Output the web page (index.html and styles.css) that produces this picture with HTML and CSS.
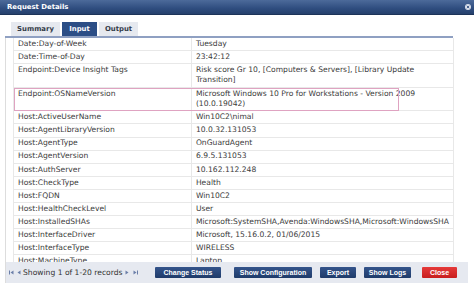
FILE: index.html
```html
<!DOCTYPE html>
<html>
<head>
<meta charset="utf-8">
<link rel="stylesheet" href="styles.css">
</head>
<body>
<div class="dialog">
  <div class="titlebar">
    <span class="title">Request Details</span>
    <span class="close-icon"><svg width="6" height="6" viewBox="0 0 6 6"><circle cx="3" cy="3" r="3" fill="#d8deea"/><path d="M1.8 1.8L4.2 4.2M4.2 1.8L1.8 4.2" stroke="#3a5585" stroke-width="0.9"/></svg></span>
  </div>
  <div class="tabs">
    <div class="tab">Summary</div>
    <div class="tab active">Input</div>
    <div class="tab">Output</div>
  </div>
  <div class="panel">
    <div class="scroll">
      <table class="grid">
        <tr><td class="k">Date:Day-of-Week</td><td class="v">Tuesday</td></tr>
        <tr><td class="k">Date:Time-of-Day</td><td class="v">23:42:12</td></tr>
        <tr><td class="k">Endpoint:Device Insight Tags</td><td class="v">Risk score Gr 10, [Computers &amp; Servers], [Library Update Transition]</td></tr>
        <tr><td class="k">Endpoint:OSNameVersion</td><td class="v">Microsoft Windows 10 Pro for Workstations - Version 2009 (10.0.19042)</td></tr>
        <tr><td class="k">Host:ActiveUserName</td><td class="v">Win10C2\nimal</td></tr>
        <tr><td class="k">Host:AgentLibraryVersion</td><td class="v">10.0.32.131053</td></tr>
        <tr><td class="k">Host:AgentType</td><td class="v">OnGuardAgent</td></tr>
        <tr><td class="k">Host:AgentVersion</td><td class="v">6.9.5.131053</td></tr>
        <tr><td class="k">Host:AuthServer</td><td class="v">10.162.112.248</td></tr>
        <tr><td class="k">Host:CheckType</td><td class="v">Health</td></tr>
        <tr><td class="k">Host:FQDN</td><td class="v">Win10C2</td></tr>
        <tr><td class="k">Host:HealthCheckLevel</td><td class="v">User</td></tr>
        <tr><td class="k">Host:InstalledSHAs</td><td class="v">Microsoft:SystemSHA,Avenda:WindowsSHA,Microsoft:WindowsSHA</td></tr>
        <tr><td class="k">Host:InterfaceDriver</td><td class="v">Microsoft, 15.16.0.2, 01/06/2015</td></tr>
        <tr><td class="k">Host:InterfaceType</td><td class="v">WIRELESS</td></tr>
        <tr><td class="k">Host:MachineType</td><td class="v">Laptop</td></tr>
      </table>
      <div class="highlight"></div>
    </div>
    <div class="footer">
      <div class="pager">
        <svg class="nav first" width="5" height="5" viewBox="0 0 5 5"><rect x="0" y="0.5" width="1" height="4" fill="#6a7ea8"/><path d="M4.5 0.5L1.5 2.5L4.5 4.5Z" fill="#6a7ea8"/></svg>
        <svg class="nav" width="4" height="5" viewBox="0 0 4 5"><path d="M3.5 0.5L0.5 2.5L3.5 4.5Z" fill="#6a7ea8"/></svg>
        <span class="showing">Showing 1 of 1-20 records</span>
        <svg class="nav" width="4" height="5" viewBox="0 0 4 5"><path d="M0.5 0.5L3.5 2.5L0.5 4.5Z" fill="#6a7ea8"/></svg>
        <svg class="nav last" width="5" height="5" viewBox="0 0 5 5"><path d="M0.5 0.5L3.5 2.5L0.5 4.5Z" fill="#6a7ea8"/><rect x="4" y="0.5" width="1" height="4" fill="#6a7ea8"/></svg>
      </div>
      <div class="buttons">
        <span class="btn b1">Change Status</span>
        <span class="btn b2">Show Configuration</span>
        <span class="btn b3">Export</span>
        <span class="btn b4">Show Logs</span>
        <span class="btn red">Close</span>
      </div>
    </div>
  </div>
</div>
</body>
</html>
```
FILE: styles.css
```css
html, body {
  margin: 0;
  padding: 0;
  background: #ffffff;
}
body {
  width: 474px;
  height: 283px;
  overflow: hidden;
  font-family: "DejaVu Sans", Verdana, sans-serif;
  color: #3a3a3a;
}
.dialog {
  width: 474px;
  height: 283px;
  display: flex;
  flex-direction: column;
}
.titlebar {
  height: 15px;
  flex: none;
  box-sizing: border-box;
  background: linear-gradient(#4c6a9a, #2f4d7f 60%, #25406c);
  border-bottom: 1px solid #1c3358;
  display: flex;
  align-items: center;
  justify-content: space-between;
  padding: 0 3px 0 7px;
}
.title {
  color: #ffffff;
  font-weight: bold;
  font-size: 6.9px;
}
.close-icon {
  display: flex;
  width: 6px;
  height: 6px;
}
.tabs {
  margin: 7px 0 0 5px;
  width: 448px;
  height: 16px;
  box-sizing: border-box;
  border-bottom: 2px solid #8fa0c2;
  display: flex;
  align-items: flex-end;
  gap: 2px;
  padding-left: 6px;
  flex: none;
}
.tab {
  height: 14px;
  line-height: 14px;
  font-size: 6.9px;
  font-weight: bold;
  color: #333b48;
  background: #e6e9ef;
  text-align: center;
}
.tab:first-child { width: 49px; }
.tab.active {
  background: #2c4e86;
  color: #ffffff;
  width: 35px;
}
.tab:last-child { width: 39px; }
.panel {
  margin-left: 5px;
  border-left: 1px solid #dddddd;
  flex: 1;
  display: flex;
  flex-direction: column;
  min-height: 0;
}
.scroll {
  height: 224px;
  overflow: hidden;
  padding-left: 7px;
  position: relative;
  flex: none;
}
.grid {
  border-collapse: collapse;
  width: 441px;
  font-size: 7.6px;
  color: #3b3b3b;
}
.grid td {
  border: 1px solid #e8e8e8;
  padding: 0.8px 4px;
  line-height: 10.5px;
  vertical-align: top;
}
.grid td.k {
  width: 171px;
}
.grid tr:first-child td { border-top: none; }
.highlight {
  position: absolute;
  left: 8px;
  top: 50px;
  width: 383px;
  height: 21px;
  border: 1px solid #dfa3c1;
  pointer-events: none;
}
.footer {
  flex: 1;
  background: #e6e9f0;
  width: 462px;
  display: flex;
  align-items: center;
}
.pager {
  display: flex;
  align-items: center;
  font-size: 7.6px;
  line-height: 10px;
  color: #333;
  width: 149px;
  flex: none;
}
.nav { display: block; flex: none; }
.nav.first { margin-left: 3px; margin-right: 3px; }
.showing { margin: 0 2px 0 2px; white-space: nowrap; }
.nav.last { margin-left: 4px; }
.buttons {
  display: flex;
  align-items: center;
}
.btn {
  height: 11px;
  line-height: 11px;
  font-family: "Liberation Sans", Arial, sans-serif;
  font-size: 7px;
  font-weight: bold;
  color: #ffffff;
  background: linear-gradient(#34548b, #1f3b6a);
  border-radius: 1px;
  text-align: center;
  white-space: nowrap;
}
.b1 { width: 66px; }
.b2 { width: 78px; margin-left: 13px; }
.b3 { width: 36px; margin-left: 8px; }
.b4 { width: 47px; margin-left: 8px; }
.red {
  width: 35px;
  margin-left: 11px;
  background: linear-gradient(#e53a3a, #c81e1e);
}
```
